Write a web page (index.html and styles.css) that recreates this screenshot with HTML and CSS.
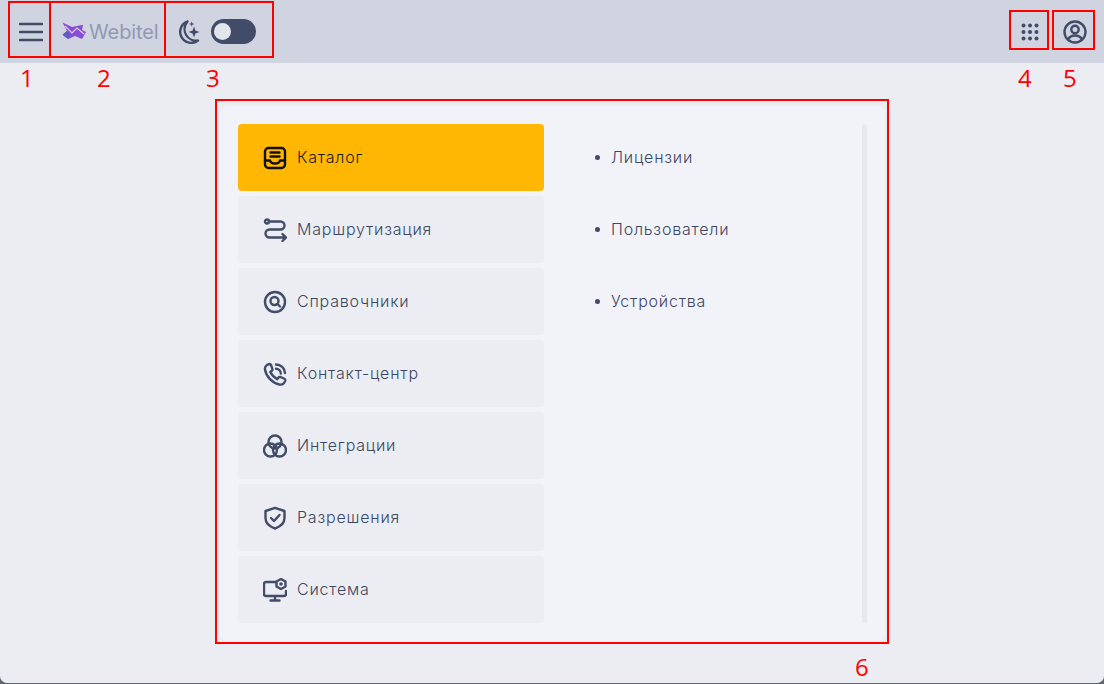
FILE: index.html
```html
<!DOCTYPE html>
<html lang="ru">
<head>
<meta charset="utf-8">
<title>Webitel</title>
<link rel="stylesheet" href="styles.css">
</head>
<body>
<div class="app">
  <header class="topbar">
    <button class="bare menu-btn" aria-label="menu">
      <svg class="i24 burger" viewBox="0 0 24 24"><path d="M1 4H23M1 12H23M1 20H23"/></svg>
    </button>
    <div class="logo">
      <svg class="logo-mark" viewBox="0 0 26 19">
        <path class="logo-a" d="M0.500 0.500L10 5 21 2.700 20 8 24 10 20 17 13 14 6 17 0.500 12.700 5 9Z"/>
        <path class="logo-b" d="M0.500 12.700L5 9 8 13 6 17Z"/>
        <path class="logo-c" d="M3 4L10 11 15 6 22 12"/>
      </svg>
      <span class="logo-text">Webitel</span>
    </div>
    <svg class="i24 moon" viewBox="0 0 24 24">
      <path d="M10.500 1.500A11 11 0 1 0 21 20.500A11.500 11.500 0 0 1 10.500 1.500Z"/>
      <path class="fill" d="M17 6.500L18.400 10.600 22.500 12 18.400 13.400 17 17.500 15.600 13.400 11.500 12 15.600 10.600Z"/>
      <path class="fill" d="M14.700 1.500L15.400 3.300 17.200 4 15.400 4.700 14.700 6.500 14 4.700 12.200 4 14 3.300Z"/>
    </svg>
    <div class="toggle"><span class="knob"></span></div>
    <div class="top-right">
      <svg class="i24 apps" viewBox="0 0 24 24">
        <g class="fill">
          <circle cx="5.500" cy="5.500" r="2"/><circle cx="12" cy="5.500" r="2"/><circle cx="18.500" cy="5.500" r="2"/>
          <circle cx="5.500" cy="12" r="2"/><circle cx="12" cy="12" r="2"/><circle cx="18.500" cy="12" r="2"/>
          <circle cx="5.500" cy="18.500" r="2"/><circle cx="12" cy="18.500" r="2"/><circle cx="18.500" cy="18.500" r="2"/>
        </g>
      </svg>
      <svg class="i24" viewBox="0 0 24 24">
        <circle cx="12" cy="12" r="10.500"/><circle cx="12" cy="9.500" r="3.700"/>
        <path d="M5 19.500C6.500 16.500 9 15.500 12 15.500S17.500 16.500 19 19.500"/>
      </svg>
    </div>
  </header>

  <main class="content">
    <section class="panel">
      <nav class="menu">
        <a class="item active">
          <svg class="i24" viewBox="0 0 24 24"><rect x="2" y="2" width="20" height="20" rx="3.500"/><path d="M7.500 6.500H16.500M7.500 10.500H16.500M2 14.500H7C7.500 16.500 9 17.500 12 17.500S16.500 16.500 17 14.500H22"/></svg>
          <span>Каталог</span>
        </a>
        <a class="item">
          <svg class="i24" viewBox="0 0 24 24"><circle cx="4" cy="3.500" r="2"/><path d="M6 3.500H17.500A4 4 0 0 1 17.500 11.500H6.500A4 4 0 0 0 6.500 19.500H23M19.500 16L23 19.500 19.500 23"/></svg>
          <span>Маршрутизация</span>
        </a>
        <a class="item">
          <svg class="i24" viewBox="0 0 24 24"><circle cx="12" cy="12" r="10"/><circle cx="11.500" cy="11" r="4"/><path d="M14.500 14L17 16.500"/></svg>
          <span>Справочники</span>
        </a>
        <a class="item">
          <svg class="i24" viewBox="0 0 24 24"><path d="M6.500 2C4 2.500 1.500 4.500 2 7.500C3 14.500 9.500 21 16.500 22.500C19.500 23 21.500 21 22.300 18.500C22.500 17.500 22 17 21 16.500L17.500 15C16.500 14.700 15.800 15 15.300 15.700L14.300 17.200C11.300 15.700 8.800 13 7.300 10L8.800 8.800C9.500 8.200 9.700 7.500 9.300 6.700L8 3C7.700 2.300 7.300 2 6.500 2Z"/><path d="M13 2.500A9 9 0 0 1 22 11M13 6.800A4.800 4.800 0 0 1 17.800 11.500"/></svg>
          <span>Контакт-центр</span>
        </a>
        <a class="item">
          <svg class="i24" viewBox="0 0 24 24"><circle cx="12" cy="8" r="6.500"/><circle cx="7.500" cy="16" r="6.500"/><circle cx="16.500" cy="16" r="6.500"/></svg>
          <span>Интеграции</span>
        </a>
        <a class="item">
          <svg class="i24" viewBox="0 0 24 24"><path d="M12 1.800L21.500 5V12C21.500 17 17.500 20.500 12 22.500C6.500 20.500 2.500 17 2.500 12V5Z"/><path d="M8 12L11 15 16.500 9"/></svg>
          <span>Разрешения</span>
        </a>
        <a class="item">
          <svg class="i24" viewBox="0 0 24 24"><path d="M12.500 4H3A2 2 0 0 0 1 6V16A2 2 0 0 0 3 18H21A2 2 0 0 0 23 16V13M12 18V22M7.500 22.500H16.500"/><path d="M18 1L22.500 3.500V8.500L18 11 13.500 8.500V3.500Z"/><circle class="fill" cx="18" cy="6" r="1.800"/></svg>
          <span>Система</span>
        </a>
      </nav>
      <ul class="sublist">
        <li><span>Лицензии</span></li>
        <li><span>Пользователи</span></li>
        <li><span>Устройства</span></li>
      </ul>
      <div class="scrollbar"></div>
    </section>
  </main>

  <div class="mark m1"></div>
  <div class="mark m2"></div>
  <div class="mark m3"></div>
  <div class="mark m4"></div>
  <div class="mark m5"></div>
  <div class="mark m6"></div>
  <span class="num n1">1</span>
  <span class="num n2">2</span>
  <span class="num n3">3</span>
  <span class="num n4">4</span>
  <span class="num n5">5</span>
  <span class="num n6">6</span>
</div>
</body>
</html>
```

FILE: styles.css
```css
* { box-sizing: border-box; }
html, body { margin: 0; height: 100%; }
body {
  background: #5c6570;
  font-family: "Inter", "Noto Sans", sans-serif;
  color: #3d4763;
  overflow: hidden;
}
.app {
  position: relative;
  height: 683px;
  background: #ecedf3;
  border-radius: 0 0 7px 7px;
  overflow: hidden;
}
svg { display: block; flex: none; }
.i24 {
  width: 24px;
  height: 24px;
  fill: none;
  stroke: #424c68;
  stroke-width: 2.4;
  stroke-linecap: round;
  stroke-linejoin: round;
}
.i24 .fill { fill: #424c68; stroke: none; }
.burger { stroke-width: 2.6; }
.topbar {
  height: 63px;
  background: #d0d4e0;
  display: flex;
  align-items: center;
  padding: 0 17px 0 19px;
}
.bare { background: none; border: 0; padding: 0; }
.logo { display: flex; align-items: center; margin-left: 19px; width: 115px; gap: 1px; }
.logo-mark { width: 26px; height: 19px; }
.logo-a { fill: #8a4cd6; }
.logo-b { fill: #5a5fc4; }
.logo-c { fill: none; stroke: #d0d4e0; stroke-width: 1.2; }
.logo-text { font-size: 20px; color: #9298b4; letter-spacing: -0.1px; }
.toggle {
  width: 45px;
  height: 25px;
  margin-left: 10px;
  border-radius: 13px;
  background: #424c68;
  display: flex;
  align-items: center;
  padding-left: 3px;
}
.knob { width: 17px; height: 17px; border-radius: 50%; background: #e3e5ec; }
.top-right { margin-left: auto; display: flex; align-items: center; gap: 21px; }
.content { padding: 43px 0 0 220px; }
.panel {
  width: 665px;
  height: 535px;
  background: #f2f3f8;
  border-radius: 8px;
  padding: 18px;
  display: flex;
}
.menu { width: 306px; display: flex; flex-direction: column; gap: 5px; }
.item {
  height: 67px;
  display: flex;
  align-items: center;
  gap: 10px;
  padding-left: 25px;
  background: #ecedf3;
  border-radius: 4px;
  font-size: 16px;
  font-weight: 300;
  letter-spacing: 0.8px;
}
.item span, .sublist span { margin-bottom: 2px; }
.item.active { background: #ffb703; color: #1b1b1f; }
.item.active .i24 { stroke: #111; }
.sublist {
  flex: 1;
  margin: 0;
  padding: 0 0 0 51px;
  list-style: none;
  display: flex;
  flex-direction: column;
  gap: 5px;
  font-size: 16px;
  font-weight: 300;
  letter-spacing: 0.8px;
}
.sublist li { height: 67px; display: flex; align-items: center; gap: 11px; }
.sublist li::before {
  content: "";
  width: 5px;
  height: 5px;
  border-radius: 50%;
  background: #424c68;
}
.scrollbar { width: 5px; background: #e6e8ee; border-radius: 3px; }
.mark { position: absolute; border: 2px solid #f00; }
.m1 { left: 8px; top: 1px; width: 43px; height: 57px; }
.m2 { left: 49px; top: 1px; width: 117px; height: 57px; }
.m3 { left: 164px; top: 1px; width: 110px; height: 57px; }
.m4 { left: 1009px; top: 10px; width: 40px; height: 40px; }
.m5 { left: 1052px; top: 10px; width: 43px; height: 40px; }
.m6 { left: 215px; top: 99px; width: 674px; height: 545px; }
.num {
  position: absolute;
  top: 63px;
  font-family: "Open Sans", sans-serif;
  font-size: 24px;
  line-height: 30px;
  color: #f00;
}
.n1 { left: 20px; }
.n2 { left: 97px; }
.n3 { left: 206px; }
.n4 { left: 1018px; }
.n5 { left: 1063px; }
.n6 { left: 855px; top: 652px; }
```
